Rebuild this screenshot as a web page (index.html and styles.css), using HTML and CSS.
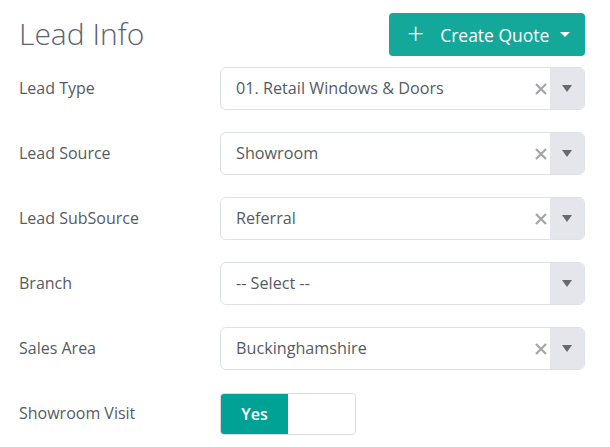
FILE: index.html
```html
<!DOCTYPE html>
<html lang="en">
<head>
    <meta charset="UTF-8">
    <title>Lead Info</title>
    <link rel="stylesheet" href="styles.css">
</head>
<body>
    <div class="panel">
        <div class="panel-header">
            <h1>Lead Info</h1>
            <button class="btn-create">
                <span class="plus">+</span>
                <span>Create Quote</span>
                <span class="caret"></span>
            </button>
        </div>

        <div class="form-row">
            <label>Lead Type</label>
            <div class="select">
                <span class="value">01. Retail Windows &amp; Doors</span>
                <svg class="clear" width="12" height="12" viewBox="0 0 12 12"><path d="M1 1L11 11M11 1L1 11"/></svg>
                <span class="arrow"><span class="tri"></span></span>
            </div>
        </div>

        <div class="form-row">
            <label>Lead Source</label>
            <div class="select">
                <span class="value">Showroom</span>
                <svg class="clear" width="12" height="12" viewBox="0 0 12 12"><path d="M1 1L11 11M11 1L1 11"/></svg>
                <span class="arrow"><span class="tri"></span></span>
            </div>
        </div>

        <div class="form-row">
            <label>Lead SubSource</label>
            <div class="select">
                <span class="value">Referral</span>
                <svg class="clear" width="12" height="12" viewBox="0 0 12 12"><path d="M1 1L11 11M11 1L1 11"/></svg>
                <span class="arrow"><span class="tri"></span></span>
            </div>
        </div>

        <div class="form-row">
            <label>Branch</label>
            <div class="select">
                <span class="value">-- Select --</span>
                <span class="arrow"><span class="tri"></span></span>
            </div>
        </div>

        <div class="form-row">
            <label>Sales Area</label>
            <div class="select">
                <span class="value">Buckinghamshire</span>
                <svg class="clear" width="12" height="12" viewBox="0 0 12 12"><path d="M1 1L11 11M11 1L1 11"/></svg>
                <span class="arrow"><span class="tri"></span></span>
            </div>
        </div>

        <div class="form-row">
            <label>Showroom Visit</label>
            <div class="toggle">
                <span class="toggle-on">Yes</span>
                <span class="toggle-off"></span>
            </div>
        </div>
    </div>
</body>
</html>
```

FILE: styles.css
```css
* {
    box-sizing: border-box;
    margin: 0;
    padding: 0;
}

body {
    background: #fff;
    font-family: 'Open Sans', 'Liberation Sans', sans-serif;
    color: #555b63;
}

.panel {
    width: 585px;
    padding: 13px 0 0 19px;
}

.panel-header {
    display: flex;
    justify-content: space-between;
    align-items: center;
    height: 43px;
    margin-bottom: 11px;
}

.panel-header h1 {
    font-size: 30px;
    font-weight: 300;
    color: #5b6371;
    margin-top: -3px;
}

.btn-create {
    display: flex;
    align-items: center;
    width: 196px;
    height: 43px;
    padding: 0 0 0 18px;
    background: #14a89b;
    color: #fff;
    border: none;
    border-radius: 4px;
    font-family: inherit;
    font-size: 17.5px;
}

.btn-create .plus {
    font-size: 30px;
    font-weight: 300;
    line-height: 1;
    margin: -4px 16px 0 0;
}

.btn-create .caret {
    width: 0;
    height: 0;
    border-left: 5px solid transparent;
    border-right: 5px solid transparent;
    border-top: 5px solid #fff;
    margin-left: 11px;
}

.form-row {
    display: grid;
    grid-template-columns: 201px 365px;
    align-items: center;
    height: 43px;
    margin-bottom: 22px;
}

.form-row label {
    font-size: 16px;
    color: #555b63;
    margin-top: -2px;
}

.select {
    display: flex;
    align-items: center;
    height: 43px;
    border: 1px solid #dde1e8;
    border-radius: 6px;
    overflow: hidden;
}

.select .value {
    flex: 1;
    padding-left: 15px;
    font-size: 16.2px;
    color: #555b63;
    margin-top: -1px;
}

.select .clear {
    stroke: #a3a5a8;
    stroke-width: 2.2;
    margin-right: 3px;
}

.select .arrow {
    display: flex;
    align-items: center;
    justify-content: center;
    width: 34px;
    height: 100%;
    background: #e4e6eb;
}

.tri {
    width: 0;
    height: 0;
    border-left: 5px solid transparent;
    border-right: 5px solid transparent;
    border-top: 7px solid #666a70;
}

.toggle {
    display: flex;
    width: 136px;
    height: 42px;
    border: 1px solid #d6dae0;
    border-radius: 4px;
    overflow: hidden;
}

.toggle-on {
    display: flex;
    align-items: center;
    justify-content: center;
    width: 67px;
    background: #00a295;
    color: #fff;
    font-size: 16px;
    font-weight: 600;
}

.toggle-off {
    flex: 1;
    background: #fff;
}
```
